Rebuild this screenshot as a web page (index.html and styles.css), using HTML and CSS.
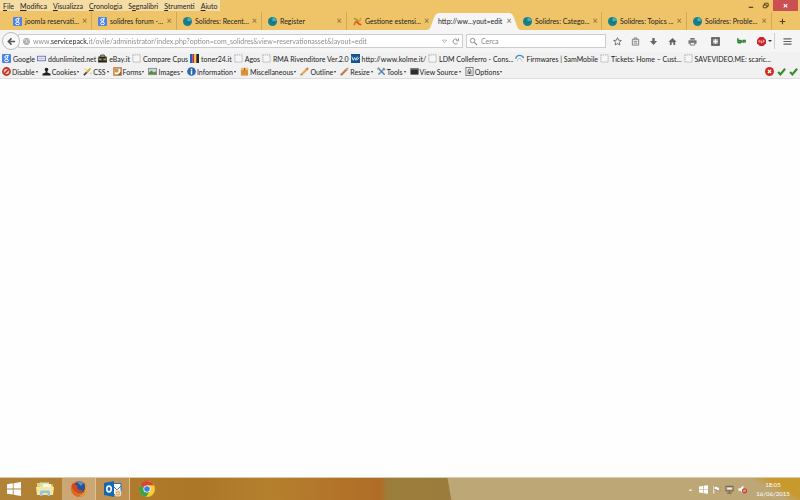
FILE: index.html
```html
<!DOCTYPE html>
<html lang="it">
<head>
  <meta charset="UTF-8">
  <meta name="viewport" content="width=device-width, initial-scale=1.0">
  <title>http://www.servicepack.it</title>
  <link rel="stylesheet" href="styles.css">
</head>
<body>

  <svg class="sprite" aria-hidden="true">
    <symbol id="google" viewBox="0 0 10 10">
      <rect width="10" height="10" rx="1" fill="#4a83ea"/>
      <ellipse cx="4.8" cy="3.3" rx="1.7" ry="1.5" fill="none" stroke="#fff" stroke-width="1.1"/>
      <ellipse cx="5" cy="7.2" rx="2.1" ry="1.4" fill="none" stroke="#fff" stroke-width="1.1"/>
      <path d="M5 1.5h2.6M5 4.6l1 1" stroke="#fff"/>
    </symbol>
    <symbol id="solidres" viewBox="0 0 10 10">
      <circle cx="5" cy="5" r="5" fill="#17808c"/>
      <path d="M5 5V.6A4.5 4.5 0 0 1 9.3 4z" fill="#49b2b5"/>
      <path d="M2 3.5Q4 7 8 6.5" fill="none" stroke="#0e6874" stroke-width=".8"/>
    </symbol>
    <symbol id="joomla" viewBox="0 0 10 10">
      <g fill="none" stroke-width="1.8" stroke-linecap="round">
        <path d="M1.5 1.7l1.8.5 3 3" stroke="#7ab52d"/>
        <path d="M8.4 1.6l-.5 1.8-3 3" stroke="#f29a25"/>
        <path d="M8.5 8.4l-1.8-.5-3-3" stroke="#e8452c"/>
        <path d="M1.6 8.5l.5-1.8 2-2" stroke="#e0642c"/>
      </g>
    </symbol>
    <symbol id="blank" viewBox="0 0 10 10">
      <rect x="1" y="1" width="8" height="8" fill="#f6f6f6" stroke="#aaa" stroke-dasharray="1.5 .7"/>
    </symbol>
    <symbol id="ddu" viewBox="0 0 10 10">
      <rect x=".5" y="2.5" width="9" height="5" fill="#e4e6f5" stroke="#6d74b5"/>
      <path d="M2 5h6" stroke="#b9bddd"/>
    </symbol>
    <symbol id="ebay" viewBox="0 0 10 10">
      <path d="M3 3V1.2h4V3" fill="none" stroke="#222"/>
      <path d="M.5 2.8h9L10 9.5H0z" fill="#28251d"/>
      <path d="M1 5h8v2H1z" fill="#a99c45"/>
      <path d="M4 5h2v2H4z" fill="#28251d"/>
    </symbol>
    <symbol id="toner" viewBox="0 0 10 10">
      <path d="M0 0h3v10H0z" fill="#2859b4"/>
      <path d="M3 0h2v10H3z" fill="#d9283c"/>
      <path d="M5 0h2v10H5z" fill="#f6d42c"/>
      <path d="M7 0h3v10H7z" fill="#252525"/>
    </symbol>
    <symbol id="kolme" viewBox="0 0 10 10">
      <rect width="10" height="10" fill="#15578d"/>
      <path d="M1 3l1.5 4L4 4l1.5 3L7 3M7 6.5L9 4" fill="none" stroke="#e2f0fa"/>
    </symbol>
    <symbol id="sam" viewBox="0 0 10 10">
      <path d="M.7 5.5Q1.5 1.5 5 1.5t4.5 3" fill="none" stroke="#3c91cc" stroke-width="1.5"/>
      <path d="M2 8.5l2-3.5h2l2 3.5" fill="none" stroke="#b8c8d4"/>
    </symbol>
    <symbol id="disable" viewBox="0 0 10 10">
      <circle cx="5" cy="5" r="4" fill="#f0c8c0" stroke="#c92c1f" stroke-width="1.8"/>
      <path d="M2.5 7.5l5-5" stroke="#c92c1f" stroke-width="1.8"/>
    </symbol>
    <symbol id="cookies" viewBox="0 0 10 10">
      <circle cx="5" cy="2.8" r="2" fill="#222"/>
      <path d="M4 4h2v2l3.5 1.5v2h-9v-2L4 6z" fill="#222"/>
    </symbol>
    <symbol id="css" viewBox="0 0 10 10">
      <path d="M1 9l6-6" stroke="#3a3a2c" stroke-width="1.8"/>
      <path d="M4 6l4.5-4.5" stroke="#e0bd27" stroke-width="2"/>
      <path d="M1.5 2.5h2M8 7h1.5" stroke="#d9bc49"/>
    </symbol>
    <symbol id="forms" viewBox="0 0 10 10">
      <rect x="1" y="1" width="8" height="8" fill="#fff" stroke="#b87739" stroke-width="1.5"/>
      <path d="M2 2h4v4H2z" fill="#dc8c44"/>
      <path d="M5 9l4-4v4z" fill="#876044"/>
    </symbol>
    <symbol id="images" viewBox="0 0 10 10">
      <rect x=".5" y="1.5" width="9" height="7" fill="#bdd4e2" stroke="#8a8a80"/>
      <path d="M1 8V6l3-2 2 2 3-1v3z" fill="#5f8b34"/>
    </symbol>
    <symbol id="info" viewBox="0 0 10 10">
      <circle cx="5" cy="5" r="4.8" fill="#2869b3"/>
      <path d="M5 2v1.5M5 4.3v4" stroke="#fff" stroke-width="1.6"/>
    </symbol>
    <symbol id="misc" viewBox="0 0 10 10">
      <path d="M1 1h8v8.5H1z" fill="#d7903c"/>
      <path d="M1 1h8v2.5H1z" fill="#efbd72"/>
      <path d="M4.3 1h1.5v3H4.3z" fill="#a76320"/>
    </symbol>
    <symbol id="outline" viewBox="0 0 10 10">
      <path d="M1.5 8.5l6-6" stroke="#e8a843" stroke-width="2.4"/>
      <path d="M7 3l2-2" stroke="#cc7c73" stroke-width="2.4"/>
      <path d="M.5 9.5l.5-2L2.5 9z" fill="#555"/>
    </symbol>
    <symbol id="resize" viewBox="0 0 10 10">
      <path d="M1.5 8.5l6-6" stroke="#c9793c" stroke-width="2.4"/>
      <path d="M7 3l2-2" stroke="#d3a285" stroke-width="2.4"/>
      <path d="M.5 9.5l.5-2L2.5 9z" fill="#555"/>
    </symbol>
    <symbol id="tools" viewBox="0 0 10 10">
      <path d="M1.5 8.5l7-7" stroke="#7f96ad" stroke-width="1.8"/>
      <path d="M2 2l6.5 6.5" stroke="#4c7db3" stroke-width="1.6"/>
      <path d="M.5 2.5l2-2M6.5 1l2.5 2.5" stroke="#8b8b8b" stroke-width="1.4"/>
    </symbol>
    <symbol id="source" viewBox="0 0 10 10">
      <path d="M.5 1.5h9v7h-9z" fill="#2d2d2d"/>
      <path d="M.5 1.5h9V3h-9z" fill="#777"/>
    </symbol>
    <symbol id="options" viewBox="0 0 10 10">
      <rect x="1" y=".5" width="8" height="9" fill="#f5f5f5" stroke="#777"/>
      <path d="M3.5 8V4a1.5 1.5 0 0 1 3 0v4" fill="none" stroke="#444"/>
      <path d="M5 5v3" stroke="#444"/>
    </symbol>
    <symbol id="check" viewBox="0 0 10 10">
      <path d="M1.2 5.5l2.6 2.7L9 2" fill="none" stroke="#3b8a2d" stroke-width="2.4"/>
    </symbol>
  </svg>

  <header class="browser">
    <div class="titlebar">
      <nav class="menu">
        <button><u>F</u>ile</button>
        <button><u>M</u>odifica</button>
        <button><u>V</u>isualizza</button>
        <button><u>C</u>ronologia</button>
        <button>S<u>e</u>gnalibri</button>
        <button><u>S</u>trumenti</button>
        <button><u>A</u>iuto</button>
      </nav>
      <div class="window-buttons">
        <button aria-label="Riduci">
          <svg class="icon" viewBox="0 0 10 10"><path d="M3 7h5" stroke="#4a3c1c" stroke-width="1.3"/></svg>
        </button>
        <button aria-label="Ripristina">
          <svg class="icon" viewBox="0 0 10 10"><path d="M2.5 4.5h4v3h-4zM4 4.500V2.500h4v3.500H6.500" fill="none" stroke="#4a3c1c"/></svg>
        </button>
        <button class="close-window" aria-label="Chiudi">
          <svg class="icon" viewBox="0 0 10 10"><path d="M3 3.5l4 3.5M7 3.5L3 7" stroke="#fff" stroke-width="1.2"/></svg>
        </button>
      </div>
    </div>

    <div class="tabs">
      <div class="tab"><svg class="icon"><use href="#google"/></svg><span>joomla reservati...</span><button aria-label="Chiudi scheda">×</button></div>
      <div class="tab"><svg class="icon"><use href="#google"/></svg><span>solidres forum -...</span><button aria-label="Chiudi scheda">×</button></div>
      <div class="tab"><svg class="icon"><use href="#solidres"/></svg><span>Solidres: Recent...</span><button aria-label="Chiudi scheda">×</button></div>
      <div class="tab"><svg class="icon"><use href="#solidres"/></svg><span>Register</span><button aria-label="Chiudi scheda">×</button></div>
      <div class="tab before-active"><svg class="icon"><use href="#joomla"/></svg><span>Gestione estensi...</span><button aria-label="Chiudi scheda">×</button></div>
      <div class="tab active">
        <svg class="tab-shape" viewBox="0 0 94 18" preserveAspectRatio="none"><path d="M0 18C6 18 5 1 12 1H82C89 1 88 18 94 18z" fill="#f5f5f5"/></svg>
        <span>http://ww...yout=edit</span><button aria-label="Chiudi scheda">×</button>
      </div>
      <div class="tab"><svg class="icon"><use href="#solidres"/></svg><span>Solidres: Catego...</span><button aria-label="Chiudi scheda">×</button></div>
      <div class="tab"><svg class="icon"><use href="#solidres"/></svg><span>Solidres: Topics ...</span><button aria-label="Chiudi scheda">×</button></div>
      <div class="tab"><svg class="icon"><use href="#solidres"/></svg><span>Solidres: Proble...</span><button aria-label="Chiudi scheda">×</button></div>
      <button class="new-tab" aria-label="Nuova scheda">
        <svg class="icon" viewBox="0 0 10 10"><path d="M5 2v6M2 5h6" stroke="#54431c" stroke-width="1.2"/></svg>
      </button>
    </div>

    <div class="navbar">
      <button class="back" aria-label="Indietro">
        <svg class="icon" viewBox="0 0 10 10"><path d="M9 5H2M5 1.5L1.5 5 5 8.5" fill="none" stroke="#555" stroke-width="1.7"/></svg>
      </button>
      <div class="field url">
        <svg class="icon" viewBox="0 0 10 10"><circle cx="5" cy="5" r="3.8" fill="#aaa"/><path d="M2 3.5q2-1 3 .5T3.5 7M6 2.5l2 1.500M6 6l1.500 1" fill="none" stroke="#eee"/></svg>
        <input type="text" aria-label="Indirizzo" value="www.servicepack.it/ovile/administrator/index.php?option=com_solidres&amp;view=reservationasset&amp;layout=edit">
        <svg class="icon" viewBox="0 0 10 10"><path d="M2.5 3.5h5L5 6.5z" fill="#fff" stroke="#aaa" stroke-width=".8"/></svg>
        <button aria-label="Ricarica">
          <svg class="icon" viewBox="0 0 10 10"><path d="M7.5 6.5A2.8 2.8 0 1 1 7 3M8.300 1.500V4.200H5.600" fill="none" stroke="#888"/></svg>
        </button>
      </div>
      <div class="field search">
        <svg class="icon" viewBox="0 0 10 10"><circle cx="4" cy="4" r="2.5" fill="none" stroke="#888"/><path d="M6 6l3 3" stroke="#888" stroke-width="1.3"/></svg>
        <input type="text" aria-label="Cerca" placeholder="Cerca">
      </div>
      <div class="toolbar-buttons">
        <button class="narrow" aria-label="Segnalibro"><svg class="icon" viewBox="0 0 10 10"><path d="M5 .8l1.300 2.800 3 .3-2.300 2 .7 3L5 7.400 2.300 8.900l.7-3-2.300-2 3-.3z" fill="none" stroke="#666"/></svg></button>
        <button class="narrow" aria-label="Elenco"><svg class="icon" viewBox="0 0 10 10"><path d="M1.5 2.5h7v6.5h-7zM3.500 2.500V1h3v1.500M3 4.800h4M3 6.800h4" fill="none" stroke="#777"/></svg></button>
        <button class="narrow" aria-label="Download"><svg class="icon" viewBox="0 0 10 10"><path d="M3.7 1h2.6v3.5H9L5 9 1 4.500h2.700z" fill="#666"/></svg></button>
        <button aria-label="Pagina iniziale"><svg class="icon" viewBox="0 0 10 10"><path d="M5 1l4.5 4.3H8V9H6V6H4v3H2V5.300H.5z" fill="#666"/></svg></button>
        <button aria-label="Stampa"><svg class="icon" viewBox="0 0 10 10"><path d="M2.5 1h5v2h-5zM.5 3.500h9v4h-9z" fill="#777"/><path d="M2.500 6h5v3h-5z" fill="#eee" stroke="#777"/></svg></button>
        <button class="wide" aria-label="Componenti"><svg class="icon" viewBox="0 0 10 10"><rect x="1" y="1" width="8" height="8" fill="#999" stroke="#555" stroke-width="1.6"/><path d="M5 2.5v5M2.5 5h5" stroke="#fff" stroke-width="1.6"/></svg></button>
        <button class="wide" aria-label="Evidenzia"><svg class="icon" viewBox="0 0 10 10"><path d="M1 1.5v5M1 4h2.5v2.500H1M5 3.500v3M7 6.500V4h2v2.500" fill="none" stroke="#2c8430" stroke-width="1.7"/></svg></button>
        <button class="adblock" aria-label="Adblock"><svg class="icon" viewBox="0 0 10 10"><path d="M3 0h4l3 3v4l-3 3H3L0 7V3z" fill="#d02127"/><path d="M2 6V4h1v2M4.500 3.500v3h1V5h-1M7 6.500v-3h1V5H7" fill="none" stroke="#f7d5d5" stroke-width=".7"/></svg><i class="caret"></i></button>
        <button class="wide app-menu" aria-label="Menu"><svg class="icon" viewBox="0 0 10 10"><path d="M.5 2h9M.5 5h9M.5 8h9" stroke="#666" stroke-width="1.3"/></svg></button>
      </div>
    </div>

    <nav class="bookmarks">
      <a href="#"><svg class="icon"><use href="#google"/></svg>Google</a>
      <a href="#"><svg class="icon"><use href="#ddu"/></svg>ddunlimited.net</a>
      <a href="#"><svg class="icon"><use href="#ebay"/></svg>eBay.it</a>
      <a href="#"><svg class="icon"><use href="#blank"/></svg>Compare Cpus</a>
      <a href="#"><svg class="icon"><use href="#toner"/></svg>toner24.it</a>
      <a href="#"><svg class="icon"><use href="#blank"/></svg>Agos</a>
      <a href="#"><svg class="icon"><use href="#blank"/></svg>RMA Rivenditore Ver.2.0</a>
      <a href="#"><svg class="icon"><use href="#kolme"/></svg>http://www.kolme.it/</a>
      <a href="#"><svg class="icon"><use href="#blank"/></svg>LDM Colleferro - Cons...</a>
      <a href="#"><svg class="icon"><use href="#sam"/></svg>Firmwares | SamMobile</a>
      <a href="#"><svg class="icon"><use href="#blank"/></svg>Tickets: Home – Cust...</a>
      <a href="#"><svg class="icon"><use href="#blank"/></svg>SAVEVIDEO.ME: scaric...</a>
    </nav>

    <div class="devbar">
      <button><svg class="icon"><use href="#disable"/></svg>Disable<i class="caret"></i></button>
      <button><svg class="icon"><use href="#cookies"/></svg>Cookies<i class="caret"></i></button>
      <button><svg class="icon"><use href="#css"/></svg>CSS<i class="caret"></i></button>
      <button><svg class="icon"><use href="#forms"/></svg>Forms<i class="caret"></i></button>
      <button><svg class="icon"><use href="#images"/></svg>Images<i class="caret"></i></button>
      <button><svg class="icon"><use href="#info"/></svg>Information<i class="caret"></i></button>
      <button><svg class="icon"><use href="#misc"/></svg>Miscellaneous<i class="caret"></i></button>
      <button><svg class="icon"><use href="#outline"/></svg>Outline<i class="caret"></i></button>
      <button><svg class="icon"><use href="#resize"/></svg>Resize<i class="caret"></i></button>
      <button><svg class="icon"><use href="#tools"/></svg>Tools<i class="caret"></i></button>
      <button><svg class="icon"><use href="#source"/></svg>View Source<i class="caret"></i></button>
      <button><svg class="icon"><use href="#options"/></svg>Options<i class="caret"></i></button>
      <div class="status">
        <svg class="icon" viewBox="0 0 10 10"><circle cx="5" cy="5" r="5" fill="#cc2f22"/><path d="M3.3 3.3l3.4 3.4M6.700 3.300L3.300 6.700" stroke="#fff" stroke-width="1.5"/></svg>
        <svg class="icon"><use href="#check"/></svg>
        <svg class="icon"><use href="#check"/></svg>
      </div>
    </div>
  </header>

  <main class="page"></main>

  <footer class="taskbar">
    <button class="start" aria-label="Start">
      <svg class="app-icon" viewBox="0 0 16 16"><path d="M1 3.2l5.800-.9v5.200H1zM7.600 2.200L15 1v6.500H7.600zM1 8.400h5.800v5.200L1 12.800zM7.600 8.400H15V15l-7.400-1.200z" fill="#fff"/></svg>
    </button>
    <button aria-label="Esplora file">
      <svg class="app-icon" viewBox="0 0 18 16"><path d="M1 2h6l1 1.500h9V13H1z" fill="#e9cf79"/><path d="M4 1.500h9v5H4z" fill="#cfe6ae"/><path d="M7 3h8v4H7z" fill="#fbf7dc"/><path d="M0 6h18l-1 8H1z" fill="#f6e6a0"/><path d="M4 15v-4q0-1.500 1.500-1.500h7Q14 9.500 14 11v4h-2.500v-3h-5v3z" fill="#8fc3e4"/></svg>
    </button>
    <button class="running" aria-label="Firefox">
      <svg class="app-icon" viewBox="0 0 18 18"><circle cx="9" cy="9" r="9" fill="#e0691f"/><circle cx="9.500" cy="7" r="6.500" fill="#23549a"/><path d="M7 1.500q4-2 7 1l-3 3z" fill="#4d94d0"/><path d="M.5 5Q2 2.500 3 2.300L5 4.500q2 .5 3 1L6.500 7.500 9 10q2 1 4-.5-1 4-5 3.500Q2 12 .5 5z" fill="#d6471e"/><path d="M15.500 3.500q4 5 1 9.500-3 4.500-8 4.500 6-2 7.500-6Q17 8 15.500 3.500z" fill="#f6c142"/></svg>
    </button>
    <button class="running dim" aria-label="Outlook">
      <svg class="app-icon" viewBox="0 0 18 16"><path d="M9 2.500h8v11H9z" fill="#fff" stroke="#1d74bd"/><path d="M9 5l4 4 4-4" fill="none" stroke="#1d74bd"/><path d="M0 2l10-2v16L0 14z" fill="#1469b4"/><ellipse cx="5" cy="8" rx="2.200" ry="2.900" fill="none" stroke="#fff" stroke-width="1.600"/><circle cx="14" cy="12" r="3.500" fill="#e9dfc6"/><path d="M12 12q2-3 4 0M16 13q-2 2-4 0" fill="none" stroke="#dc9b30"/></svg>
    </button>
    <button aria-label="Chrome">
      <svg class="app-icon" viewBox="0 0 16 16"><circle cx="8" cy="8" r="8" fill="#f6cd32"/><path d="M8 8L1 4A8 8 0 0 1 15 4.200H8z" fill="#dc4435"/><path d="M8 8L1 4a8 8 0 0 0 6 12l4-6.300z" fill="#43a047"/><circle cx="8" cy="8" r="3.600" fill="#fff"/><circle cx="8" cy="8" r="2.800" fill="#3f7fdb"/></svg>
    </button>
    <div class="tray">
      <svg class="icon" viewBox="0 0 10 10"><path d="M3 6.500h4L5 4.500z" fill="#fff"/></svg>
      <svg class="icon" viewBox="0 0 10 10"><path d="M0 1.700l4.500-.7v3.700H0zM5.200 .9L10 .2v4.500H5.200zM0 5.300h4.500V9L0 8.300zM5.200 5.300H10v4.500l-4.800-.7z" fill="#fff"/></svg>
      <svg class="icon" viewBox="0 0 10 10"><path d="M2 1v8.500" stroke="#fff"/><path d="M2.500 1.500h3l.7 1H9L8 4.200 9 6H5.500L5 5H2.500z" fill="#fff" stroke="#746648" stroke-width=".5"/></svg>
      <svg class="icon" viewBox="0 0 10 10"><path d="M1 1.500h8v5H1zM5 6.500V9M2.500 9h5" fill="#c9bb99" stroke="#786b52" stroke-width="1.200"/><path d="M2.500 4h5" stroke="#fff"/></svg>
      <svg class="icon" viewBox="0 0 10 10"><path d="M.5 3.500h2L6 .5v9L2.500 6.500h-2z" fill="#fff"/><circle cx="7.200" cy="6.500" r="2.200" fill="#f2d5cf" stroke="#c4382c" stroke-width="1.300"/><path d="M5.800 5.200l2.800 2.700" stroke="#c4382c"/></svg>
    </div>
    <div class="clock">
      <span>18:05</span>
      <span>16/06/2015</span>
    </div>
  </footer>

</body>
</html>
```
FILE: styles.css
```css
body {
  margin: 0;
  min-height: 100vh;
  display: flex;
  flex-direction: column;
  background-color: #fefefe;
  font-family: Lato, "Open Sans", sans-serif;
  font-size: 7px;
  line-height: 10px;
  color: #222;
}

button, input {
  margin: 0;
  padding: 0;
  border: none;
  background: none;
  font: inherit;
  color: inherit;
}

button {
  display: flex;
  align-items: center;
  justify-content: center;
}

.sprite {
  display: none;
}

.icon {
  display: block;
  flex: none;
  width: 9px;
  height: 9px;
}

.caret {
  flex: none;
  border: 2px solid transparent;
  border-top-color: #333;
  border-bottom: none;
}

/* title bar */

.browser {
  background-color: #f1f1f1;
}

.titlebar {
  display: flex;
  justify-content: space-between;
  height: 12px;
  background-color: #efc469;
}

.menu {
  display: flex;
  gap: 6px;
  padding: 0 3px;
  height: 11px;
  background-color: #f5dca5;
}

.window-buttons {
  display: flex;
  height: 11px;
  padding-right: 2px;
}

.window-buttons button {
  width: 15px;
}

.window-buttons .close-window {
  width: 25px;
  background-color: #cb5053;
}

/* tabs */

.tabs {
  display: flex;
  height: 18px;
  padding-left: 7px;
  background-color: #efc469;
}

.tab {
  box-sizing: border-box;
  position: relative;
  display: flex;
  align-items: center;
  gap: 3px;
  flex: 0 1 85px;
  min-width: 0;
  padding: 0 4px 0 6px;
  border-right: 1px solid #d3a852;
}

.tab span {
  flex: 1;
  white-space: nowrap;
}

.tab button {
  width: 6px;
  font-size: 9px;
  color: #7d6638;
}

.tab.active,
.tab.before-active {
  border-color: transparent;
}

.tab.active span,
.tab.active button {
  position: relative;
}

.tab-shape {
  position: absolute;
  left: -5px;
  bottom: 0;
  width: 94px;
  height: 18px;
}

.new-tab {
  width: 20px;
}

/* address row */

.navbar {
  display: flex;
  align-items: center;
  height: 22px;
  background-color: #f5f5f5;
}

.back {
  flex: none;
  z-index: 1;
  width: 18px;
  height: 18px;
  margin-left: 2px;
  border: 1px solid #bbb;
  border-radius: 50%;
  background-color: #fafafa;
}

.field {
  box-sizing: border-box;
  display: flex;
  align-items: center;
  height: 14px;
  border: 1px solid #ccc;
  background-color: #fff;
}

.url {
  flex: 1;
  gap: 2px;
  margin-left: -2px;
  padding: 0 2px 0 3px;
}

/* the host part of the address is darker than the rest */
.url input {
  flex: 1;
  min-width: 0;
  background: linear-gradient(to right, #888 17px, #222 17px, #222 55px, #888 55px);
  background-clip: text;
  -webkit-background-clip: text;
  -webkit-text-fill-color: transparent;
}

.search {
  gap: 3px;
  width: 140px;
  margin: 0 2px 0 3px;
  padding: 0 2px;
}

.search input {
  flex: 1;
  min-width: 0;
}

.search input::placeholder {
  color: #888;
}

.toolbar-buttons {
  display: flex;
}

.toolbar-buttons button {
  width: 20px;
  height: 16px;
}

.toolbar-buttons .narrow {
  width: 18px;
}

.toolbar-buttons .wide {
  width: 26px;
}

.toolbar-buttons .adblock {
  gap: 2px;
}

.toolbar-buttons .app-menu {
  box-sizing: border-box;
  border-left: 1px solid #ccc;
}

/* bookmarks and developer toolbar */

.bookmarks,
.devbar {
  display: flex;
  align-items: center;
  height: 13px;
  padding: 0 2px;
  white-space: nowrap;
}

.bookmarks {
  gap: 2px;
}

.bookmarks a {
  display: flex;
  align-items: center;
  gap: 2px;
  color: inherit;
  text-decoration: none;
}

.devbar {
  gap: 4px;
  border-bottom: 1px solid #ddd;
}

.devbar button {
  gap: 1px;
}

.devbar .caret {
  border-width: 2px 1px 0;
}

.status {
  display: flex;
  gap: 3px;
  margin-left: auto;
}

.page {
  flex: 1;
}

/* taskbar */

.taskbar {
  display: flex;
  height: 22px;
  border-top: 1px solid #dccbaa;
  background:
    linear-gradient(210deg, #c8992c 0 16px, transparent 26px) right / 60px 100% no-repeat,
    linear-gradient(80deg, transparent 444px, #bda777 445px),
    linear-gradient(to right, #b08438, #b27c2c 90px, #ad7728 200px, #b5802e 270px, #b06c26 380px, #9c7e3c 388px, #9c7c3c 450px);
}

.taskbar button {
  width: 34px;
}

.taskbar .start {
  width: 28px;
}

.taskbar .running {
  box-sizing: border-box;
  background-color: #cba775;
  border-right: 1px solid #dcc194;
}

.taskbar .dim {
  background-color: #bf9253;
}

.app-icon {
  width: 18px;
  height: 16px;
}

.tray {
  display: flex;
  align-items: center;
  gap: 4px;
  margin-left: auto;
}

.clock {
  display: flex;
  flex-direction: column;
  align-items: center;
  justify-content: center;
  width: 34px;
  padding: 0 10px 0 9px;
  font-size: 6px;
  line-height: 9px;
  color: #fff;
}
```
